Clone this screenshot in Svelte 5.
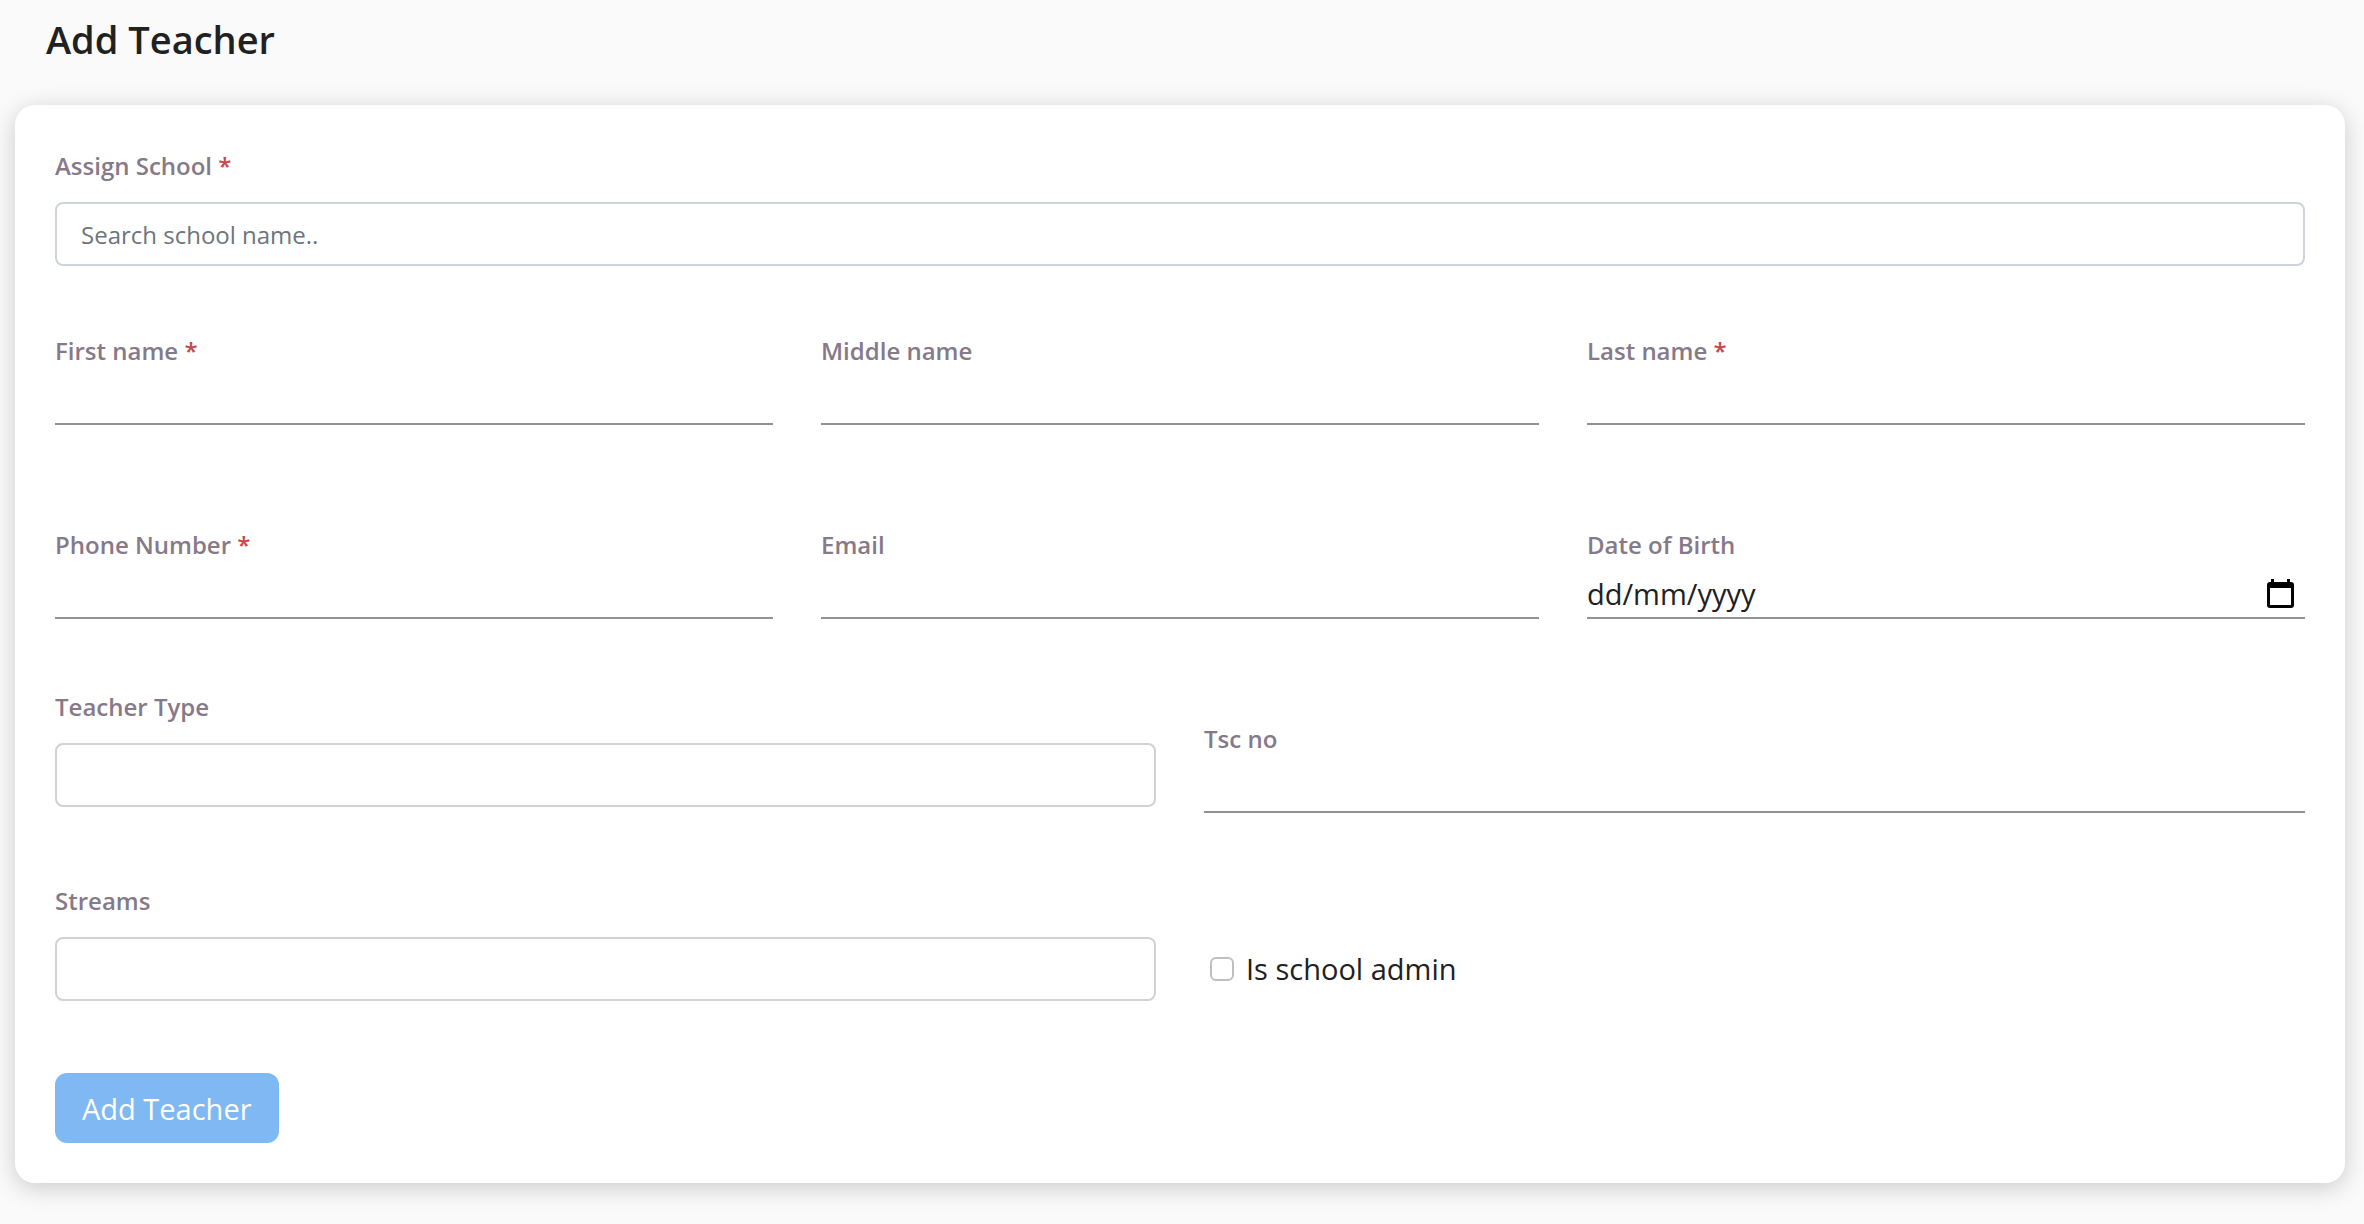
<script>
  let school = $state('');
  let isAdmin = $state(false);

  const nameFields = [
    { id: 'first-name', label: 'First name', type: 'text', required: true },
    { id: 'middle-name', label: 'Middle name', type: 'text', required: false },
    { id: 'last-name', label: 'Last name', type: 'text', required: true },
  ];
  const contactFields = [
    { id: 'phone', label: 'Phone Number', type: 'tel', required: true },
    { id: 'email', label: 'Email', type: 'email', required: false },
  ];
</script>

{#snippet lineField(field)}
  <div class="field">
    <label for={field.id}>{field.label}{#if field.required}&nbsp;<span class="star">*</span>{/if}</label>
    <input class="line" id={field.id} type={field.type} required={field.required} />
  </div>
{/snippet}

<main>
  <h1>Add Teacher</h1>

  <form class="card" onsubmit={(e) => e.preventDefault()}>
    <div class="field">
      <label for="school">Assign School <span class="star">*</span></label>
      <input class="box search" id="school" type="text" placeholder="Search school name.." bind:value={school} />
    </div>

    <div class="row thirds names">
      {#each nameFields as field}
        {@render lineField(field)}
      {/each}
    </div>

    <div class="row thirds contact">
      {#each contactFields as field}
        {@render lineField(field)}
      {/each}
      <div class="field">
        <label for="dob">Date of Birth</label>
        <div class="line date">
          <input id="dob" type="text" placeholder="dd/mm/yyyy" />
          <button class="picker" type="button" aria-label="Open calendar">
            <svg width="27" height="29" viewBox="0 0 27 29" aria-hidden="true">
              <path d="M4 0h3v3h13V0h3v3h1a3 3 0 0 1 3 3v20a3 3 0 0 1-3 3H3a3 3 0 0 1-3-3V6a3 3 0 0 1 3-3h1zM3 9v17h21V9z" fill="#000" fill-rule="evenodd" />
            </svg>
          </button>
        </div>
      </div>
    </div>

    <div class="row halves">
      <div class="field">
        <label for="teacher-type">Teacher Type</label>
        <select class="box" id="teacher-type"><option value=""></option></select>
      </div>
      <div class="low">
        {@render lineField({ id: 'tsc', label: 'Tsc no', type: 'text', required: false })}
      </div>
    </div>

    <div class="row halves">
      <div class="field">
        <label for="streams">Streams</label>
        <select class="box" id="streams"><option value=""></option></select>
      </div>
      <div class="low check">
        <input id="admin" type="checkbox" bind:checked={isAdmin} />
        <label for="admin">Is school admin</label>
      </div>
    </div>

    <button class="submit" type="submit" disabled>Add Teacher</button>
  </form>
</main>

<style>
  :global(body) {
    background: #fafafa;
  }
  main,
  input,
  select,
  button {
    font-family: 'Open Sans', 'Noto Sans', sans-serif;
    color: #212121;
  }
  main *,
  main {
    box-sizing: border-box;
  }
  main {
    padding: 0 19px 41px 15px;
  }
  h1 {
    margin: 0;
    padding: 15px 31px 42px;
    font-size: 38px;
    line-height: 48px;
    font-weight: 600;
  }
  .card {
    padding: 40px;
    border-radius: 20px;
    background: #fff;
    box-shadow: 0 5px 24px rgba(0, 0, 0, 0.19);
  }
  .field {
    display: flex;
    flex-direction: column;
  }
  .field label {
    font-size: 24px;
    line-height: 42px;
    font-weight: 600;
    color: #867989;
  }
  .field .star {
    color: #cb444a;
  }
  .box {
    width: 100%;
    height: 64px;
    margin: 15px 0 0;
    padding: 0 24px;
    border: 2px solid #d2d2d2;
    border-radius: 8px;
    background: #fff;
    appearance: none;
    font-size: 24px;
  }
  .search {
    border-color: #ced4da;
  }
  .search::placeholder {
    color: #6c757d;
    opacity: 1;
  }
  .line {
    width: 100%;
    height: 53px;
    margin: 0;
    padding: 0;
    border: 0;
    border-bottom: 2px solid #929292;
    border-radius: 0;
    background: transparent;
    font-size: 29px;
  }
  .date {
    display: flex;
    align-items: center;
    padding: 3px 11px 0 0;
  }
  .date input {
    flex: 1;
    min-width: 0;
    height: 100%;
    padding: 0;
    border: 0;
    background: transparent;
    font-size: 29px;
  }
  .date input::placeholder {
    color: #212121;
    opacity: 1;
  }
  .picker {
    display: flex;
    padding: 0;
    border: 0;
    background: none;
  }
  .row {
    display: grid;
    column-gap: 48px;
    margin-top: 67px;
  }
  .thirds {
    grid-template-columns: repeat(3, minmax(0, 1fr));
  }
  .halves {
    grid-template-columns: repeat(2, minmax(0, 1fr));
  }
  .names {
    margin-top: 64px;
  }
  .contact {
    margin-top: 99px;
  }
  .low {
    padding-top: 32px;
    align-self: end;
  }
  .check {
    display: flex;
    align-items: center;
    gap: 12px;
    height: 64px;
    padding: 0 6px;
  }
  .check input {
    width: 24px;
    height: 24px;
    margin: 0;
    border: 2px solid #bfbfbf;
    border-radius: 6px;
    background: #fff;
    appearance: none;
  }
  .check input:checked {
    border-color: #1976d2;
    background: #1976d2;
  }
  .check label {
    font-size: 29px;
    line-height: 42px;
  }
  .submit {
    display: block;
    height: 70px;
    margin-top: 72px;
    padding: 0 27px;
    border: 0;
    border-radius: 12px;
    background: #7fb8f2;
    color: #fff;
    font-size: 29px;
  }
</style>
